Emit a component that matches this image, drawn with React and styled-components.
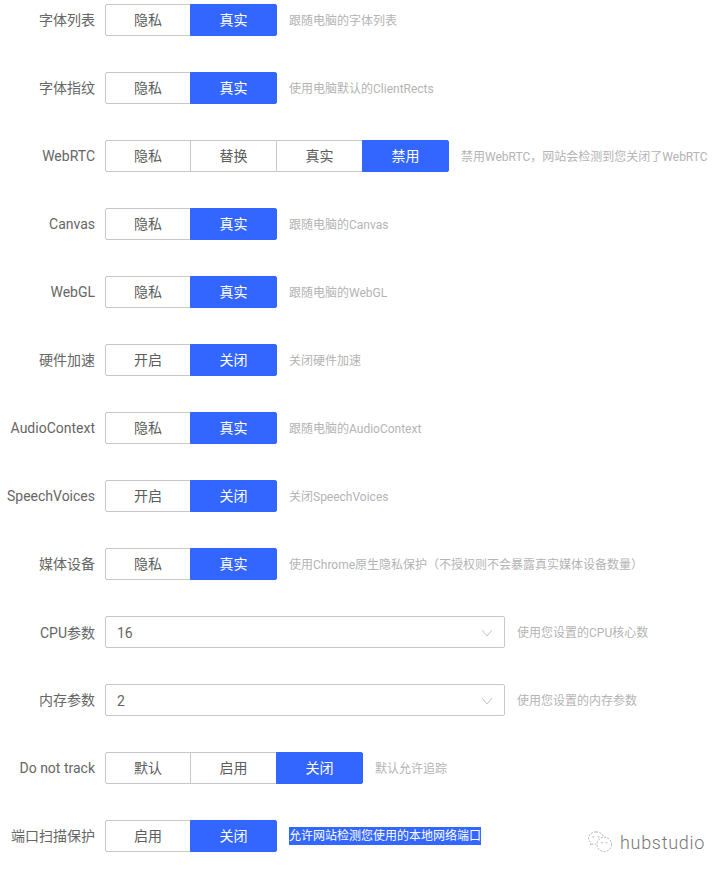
import React from "react";
import styled, { createGlobalStyle } from "styled-components";

const GlobalStyle = createGlobalStyle`
  html, body {
    margin: 0;
    padding: 0;
    background: #fff;
  }
  body {
    font-family: Roboto, "Noto Sans CJK SC", sans-serif;
  }
`;

const Page = styled.div`
  position: relative;
  width: 728px;
  height: 872px;
  padding-top: 4px;
  box-sizing: border-box;
  display: flex;
  flex-direction: column;
  gap: 36px;
  overflow: hidden;
`;

const Row = styled.div`
  display: flex;
  align-items: center;
  height: 32px;
`;

const Label = styled.div`
  width: 95px;
  margin-right: 10px;
  margin-bottom: ${(p) => (p.$raise ? "2px" : "0")};
  flex: none;
  text-align: right;
  font-size: 14px;
  color: #666;
  white-space: nowrap;
`;

const Group = styled.div`
  display: flex;
  flex: none;
`;

const Seg = styled.div`
  width: ${(p) => (p.$first ? "86px" : "87px")};
  margin-left: ${(p) => (p.$first ? "0" : "-1px")};
  height: 32px;
  padding-bottom: 2px;
  box-sizing: border-box;
  display: flex;
  align-items: center;
  justify-content: center;
  font-size: 14px;
  border: 1px solid ${(p) => (p.$active ? "#3366ff" : "#c8c8c8")};
  background: ${(p) => (p.$active ? "#3366ff" : "#fff")};
  color: ${(p) => (p.$active ? "#fff" : "#5c5c5c")};
  &:first-child {
    border-radius: 2px 0 0 2px;
  }
  &:last-child {
    border-radius: 0 2px 2px 0;
  }
`;

const Select = styled.div`
  width: 400px;
  height: 32px;
  box-sizing: border-box;
  flex: none;
  display: flex;
  align-items: center;
  justify-content: space-between;
  padding: 0 10px 0 11px;
  border: 1px solid #c8c8c8;
  border-radius: 2px;
  font-size: 14px;
  color: #666;
`;

const SelectValue = styled.span`
  padding-top: 2px;
`;

const ChevronIcon = styled.svg`
  margin-top: 1px;
`;

const Hint = styled.div`
  margin-left: 12px;
  margin-bottom: ${(p) => (p.$raise ? "2px" : "0")};
  font-size: 12px;
  color: #b4b4b4;
  white-space: nowrap;
`;

const Selected = styled.span`
  display: inline-block;
  height: 18px;
  line-height: 18px;
  background: #3367ff;
  color: #fff;
`;

const Watermark = styled.div`
  position: absolute;
  left: 587px;
  top: 829px;
  display: flex;
  align-items: center;
  gap: 7px;
  color: #777;
  font-size: 18px;
  font-weight: 300;
  letter-spacing: 0.7px;
`;

const WatermarkText = styled.span`
  padding-top: 3px;
`;

const rows = [
  { label: "字体列表", cjk: true, opts: ["隐私", "真实"], on: 1, hint: "跟随电脑的字体列表" },
  { label: "字体指纹", cjk: true, opts: ["隐私", "真实"], on: 1, hint: "使用电脑默认的ClientRects" },
  { label: "WebRTC", opts: ["隐私", "替换", "真实", "禁用"], on: 3, hint: "禁用WebRTC，网站会检测到您关闭了WebRTC" },
  { label: "Canvas", opts: ["隐私", "真实"], on: 1, hint: "跟随电脑的Canvas" },
  { label: "WebGL", opts: ["隐私", "真实"], on: 1, hint: "跟随电脑的WebGL" },
  { label: "硬件加速", cjk: true, opts: ["开启", "关闭"], on: 1, hint: "关闭硬件加速" },
  { label: "AudioContext", opts: ["隐私", "真实"], on: 1, hint: "跟随电脑的AudioContext" },
  { label: "SpeechVoices", opts: ["开启", "关闭"], on: 1, hint: "关闭SpeechVoices" },
  { label: "媒体设备", cjk: true, opts: ["隐私", "真实"], on: 1, hint: "使用Chrome原生隐私保护（不授权则不会暴露真实媒体设备数量）" },
  { label: "CPU参数", value: "16", hint: "使用您设置的CPU核心数" },
  { label: "内存参数", cjk: true, value: "2", hint: "使用您设置的内存参数" },
  { label: "Do not track", opts: ["默认", "启用", "关闭"], on: 2, hint: "默认允许追踪" },
  { label: "端口扫描保护", cjk: true, opts: ["启用", "关闭"], on: 1, hint: "允许网站检测您使用的本地网络端口", selected: true },
];

function Chevron() {
  return (
    <ChevronIcon width="14" height="14" viewBox="0 0 14 14" fill="none" stroke="#c4c4c4" strokeWidth="1">
      <path d="M2 4l5 6 5-6" />
    </ChevronIcon>
  );
}

function WechatMark() {
  return (
    <svg width="26" height="23" viewBox="0 0 26 24" fill="none" stroke="#aaa" strokeWidth="1" strokeDasharray="2 1.5">
      <path d="M9 2C4.5 2 1 5 1 8.5c0 2 1 3.6 2.6 4.8L3 16l3-1.6c1 .3 2 .4 3 .4" />
      <path d="M9 2c4 0 7 2.4 7.6 5.4" />
      <circle cx="17.5" cy="15" r="7.5" />
      <circle cx="6" cy="7" r=".6" />
      <circle cx="11.5" cy="7" r=".6" />
      <circle cx="15" cy="13" r=".6" />
      <circle cx="20" cy="13" r=".6" />
    </svg>
  );
}

export default function App() {
  return (
    <>
      <GlobalStyle />
      <Page>
        {rows.map((r) => (
          <Row key={r.label}>
            <Label $raise={r.cjk}>{r.label}</Label>
            {r.opts ? (
              <Group>
                {r.opts.map((o, i) => (
                  <Seg key={o} $first={i === 0} $active={i === r.on}>
                    {o}
                  </Seg>
                ))}
              </Group>
            ) : (
              <Select>
                <SelectValue>{r.value}</SelectValue>
                <Chevron />
              </Select>
            )}
            <Hint $raise={!r.selected}>{r.selected ? <Selected>{r.hint}</Selected> : r.hint}</Hint>
          </Row>
        ))}
        <Watermark>
          <WechatMark />
          <WatermarkText>hubstudio</WatermarkText>
        </Watermark>
      </Page>
    </>
  );
}
